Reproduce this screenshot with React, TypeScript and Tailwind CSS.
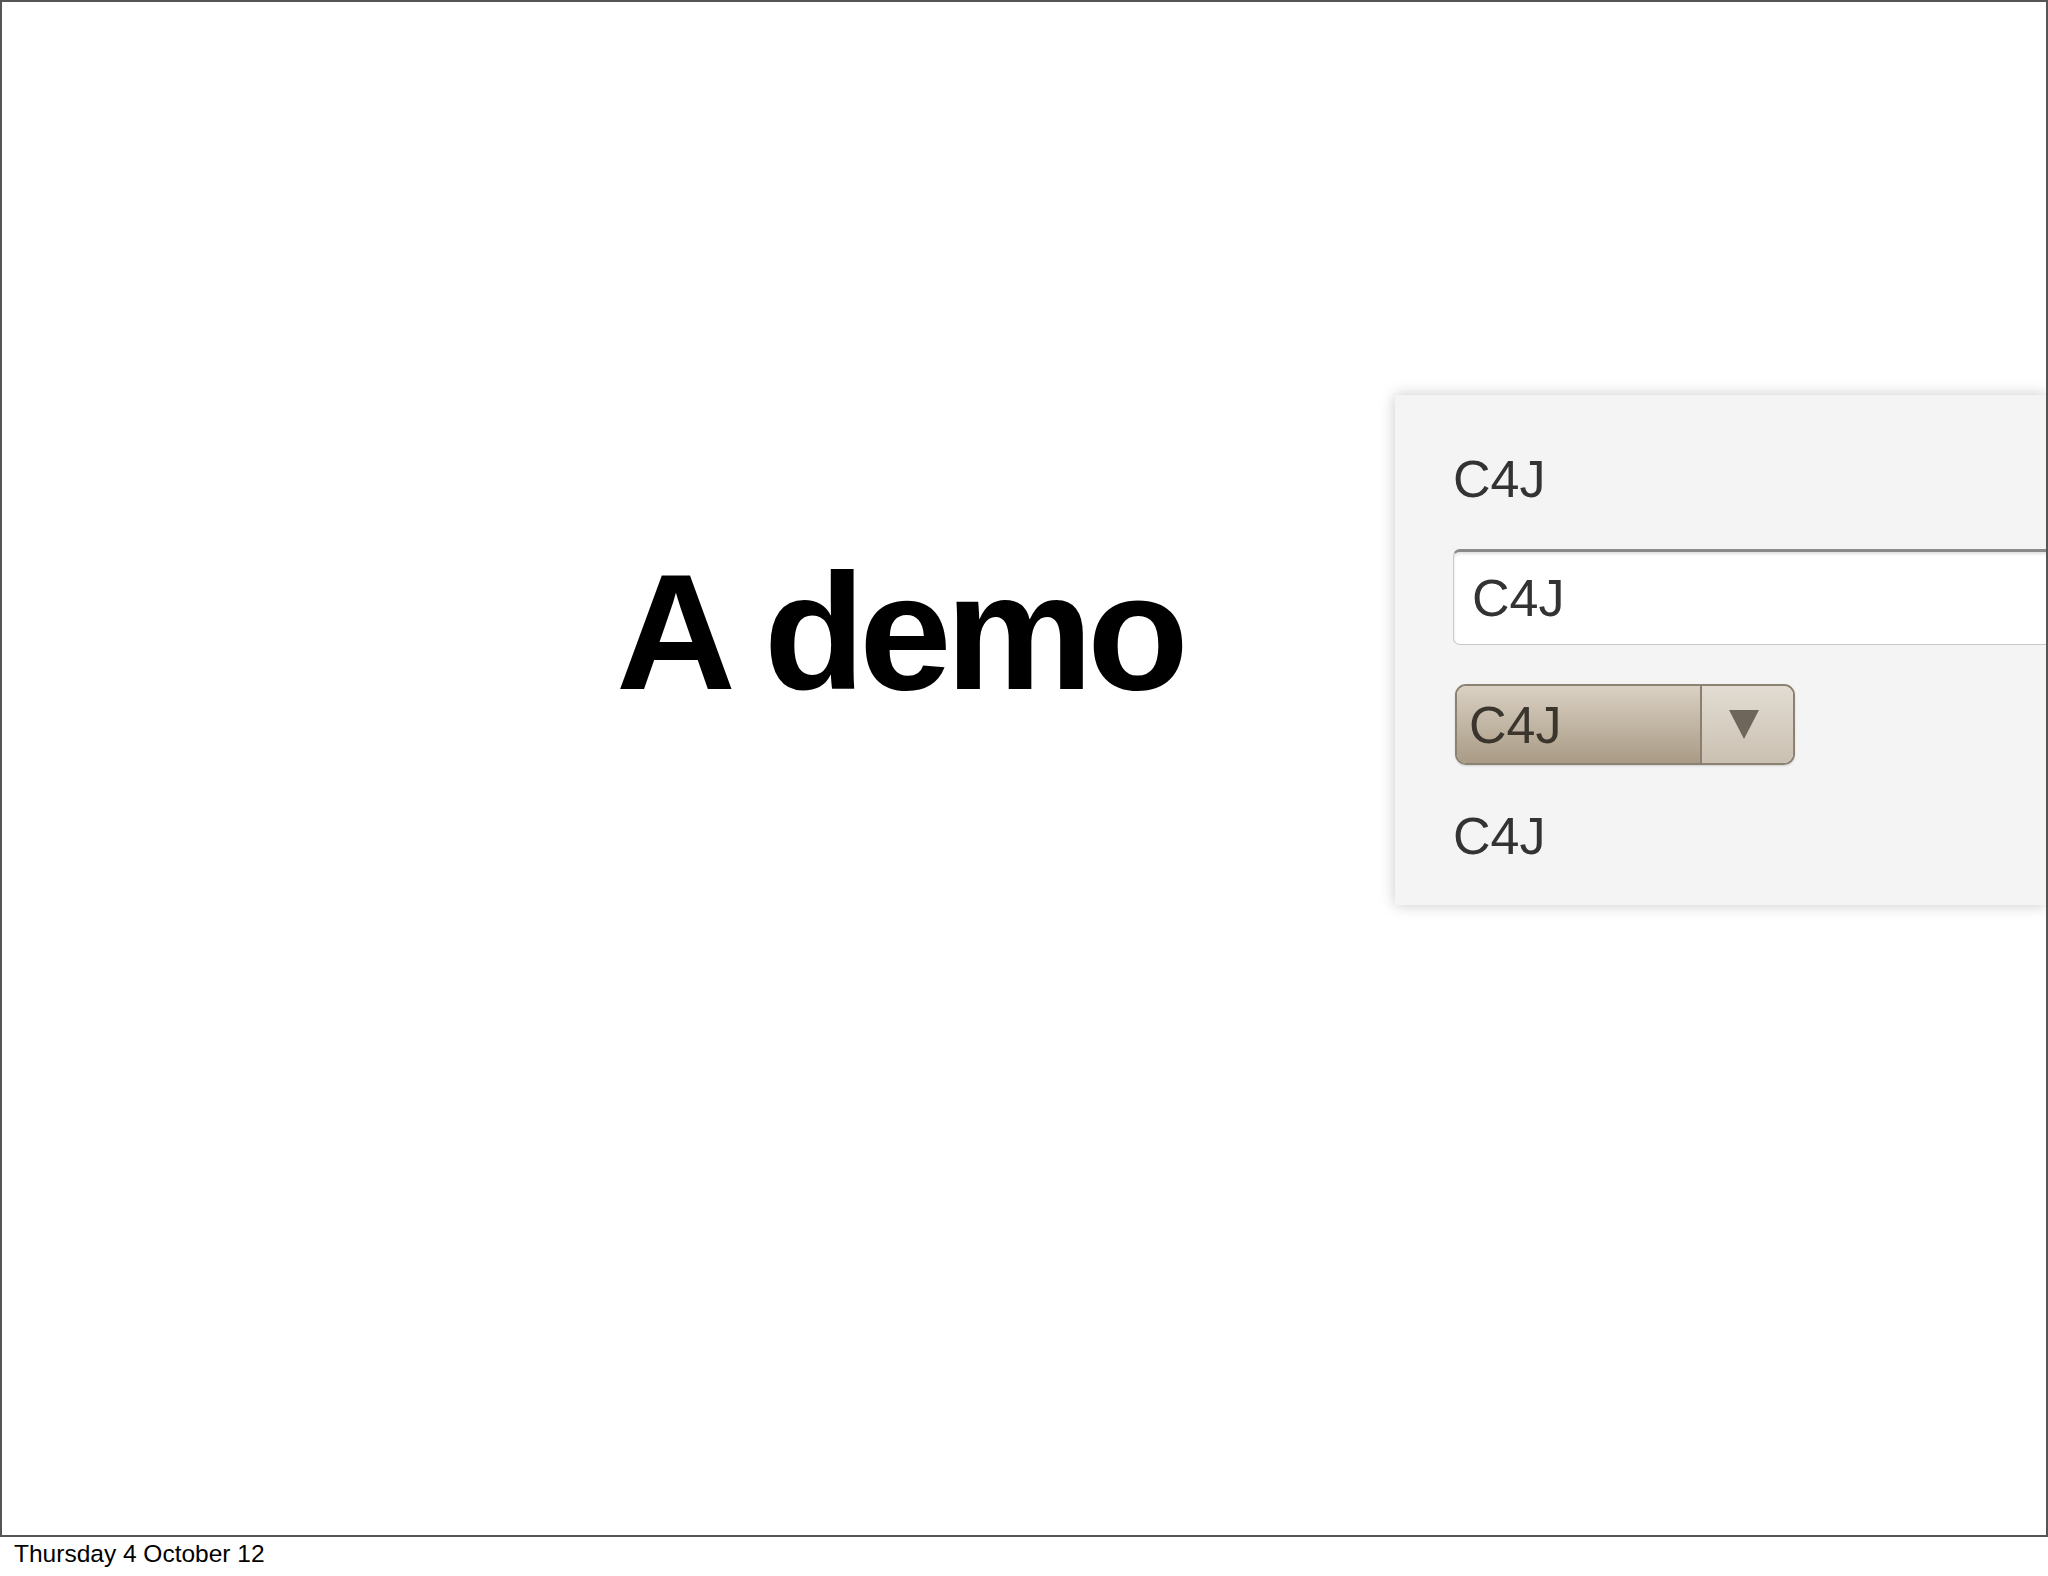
import React from "react";

const sans = "font-['Liberation_Sans',Arial,sans-serif]";

function Triangle() {
  return (
    <svg width="30" height="29" viewBox="0 0 30 29">
      <polygon points="0,0 30,0 15,29" fill="#6e665a" />
    </svg>
  );
}

function DemoPanel() {
  return (
    <div className="flex-1 mt-[393px] h-[510px] bg-[#f4f4f5] shadow-[0_0_14px_rgba(0,0,0,0.22)] overflow-hidden flex flex-col pl-[58px] pt-[58px]">
      <p className={`${sans} text-[52px] leading-none text-[#333]`}>C4J</p>

      <div className="mt-[44px] w-[700px] h-[96px] bg-white rounded-[7px] border border-[#c9c9c9] border-t-[3px] border-t-[#8a8a8a] shadow-[inset_0_2px_3px_rgba(0,0,0,0.12)] flex items-center pl-[18px]">
        <span className={`${sans} text-[52px] leading-none text-[#333]`}>C4J</span>
      </div>

      <div className="mt-[39px] ml-[2px] w-[340px] h-[81px] rounded-[11px] border-2 border-[#8c8271] overflow-hidden flex shadow-[0_1px_2px_rgba(0,0,0,0.15)]">
        <div className="w-[245px] h-full bg-gradient-to-b from-[#dad1c4] to-[#a99b85] flex items-center pl-[12px] border-r-2 border-[#8a806f]">
          <span className={`${sans} text-[52px] leading-none text-[#3a352d]`}>C4J</span>
        </div>
        <div className="flex-1 h-full bg-gradient-to-b from-[#e2dcd2] to-[#cbc1b2] flex items-center justify-center pr-[8px]">
          <Triangle />
        </div>
      </div>

      <p className={`${sans} mt-[45px] text-[52px] leading-none text-[#333]`}>C4J</p>
    </div>
  );
}

export default function App() {
  return (
    <div className="w-[2048px] h-[1576px] bg-white overflow-hidden">
      <div className="w-[2048px] h-[1537px] border-2 border-[#555] flex overflow-hidden">
        <div className="w-[1393px] shrink-0 pl-[614px] pt-[547px]">
          <h1 className={`${sans} text-[166px] font-bold leading-none tracking-[-6px] text-black`}>
            A demo
          </h1>
        </div>
        <DemoPanel />
      </div>
      <p className={`${sans} pl-[14px] mt-[5px] text-[24.5px] leading-none text-black`}>
        Thursday 4 October 12
      </p>
    </div>
  );
}
